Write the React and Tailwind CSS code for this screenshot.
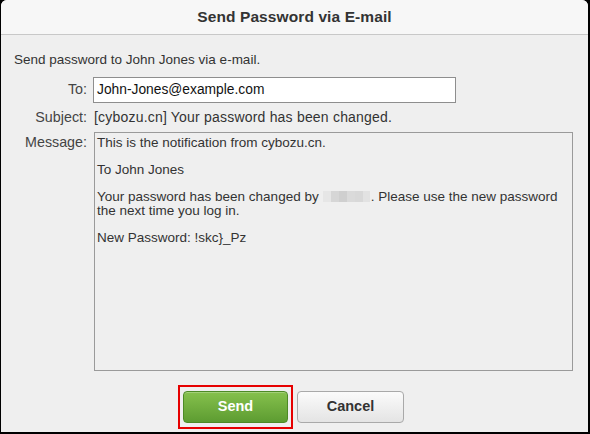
import React from "react";

export default function App() {
  const font = { fontFamily: '"Liberation Sans", Arial, sans-serif' };
  return (
    <div className="w-[590px] h-[434px] bg-black pl-px pr-[2px] pb-[2px]" style={font}>
      <div className="h-full flex flex-col bg-[#efefef] rounded-t-[6px] overflow-hidden">
        <div className="h-[35px] shrink-0 flex items-center justify-center bg-[#f7f7f7] border-b border-[#c8c8c8] text-[15.5px] font-bold text-[#333] tracking-[0.1px]">
          Send Password via E-mail
        </div>
        <div className="flex-1 flex flex-col pt-[17px] text-[13.5px] text-[#333]">
          <div className="pl-[13px] leading-[16px]">Send password to John Jones via e-mail.</div>
          <div className="grid grid-cols-[86px_1fr] gap-x-[6px] mt-[9px]">
            <div className="text-right text-[#444] text-[14.3px] leading-[16px] pt-[4px]">To:</div>
            <div>
              <div className="w-[363px] h-[26px] bg-white border border-[#8e8e8e] px-[3px] flex items-center text-[13.8px] text-[#111]">
                John-Jones@example.com
              </div>
            </div>
            <div className="text-right text-[#444] text-[14.3px] leading-[16px] mt-[6px]">Subject:</div>
            <div className="leading-[16px] mt-[6px] pl-px text-[14px] tracking-[0.2px]">[cybozu.cn] Your password has been changed.</div>
            <div className="text-right text-[#444] text-[14.3px] leading-[16px] pt-[2px] mt-[7px]">Message:</div>
            <div className="mt-[7px] pl-px">
              <div className="w-[479px] h-[239px] border border-[#9a9a9a] px-[2px] pt-[3px] text-[#333] leading-[13.5px]">
                <div>This is the notification from cybozu.cn.</div>
                <div className="h-[13.5px]" />
                <div>To John Jones</div>
                <div className="h-[13.5px]" />
                <div className="flex items-center">
                  <span>Your password has been changed by</span>
                  <span className="inline-flex ml-[4px] mr-[1px] h-[11px]">
                    <span className="w-[8px] bg-[#e6e6e6]" />
                    <span className="w-[8px] bg-[#d6d6d6]" />
                    <span className="w-[8px] bg-[#cfcfcf]" />
                    <span className="w-[8px] bg-[#dadada]" />
                    <span className="w-[8px] bg-[#d8d8d8]" />
                    <span className="w-[7px] bg-[#e2e2e2]" />
                  </span>
                  <span>. Please use the new password</span>
                </div>
                <div>the next time you log in.</div>
                <div className="h-[13.5px]" />
                <div>New Password: !skc}_Pz</div>
              </div>
            </div>
          </div>
          <div className="mt-[14px] flex justify-center pr-[7px] gap-[4px]">
            <div className="border-2 border-[#e60000] px-[3px] py-[4px]">
              <button className="w-[105px] h-[32px] rounded-[4px] border border-[#4d8a26] bg-gradient-to-b from-[#86c14d] to-[#5d9c31] text-white text-[14.5px] font-bold shadow-[inset_0_1px_0_rgba(255,255,255,0.25)]">
                Send
              </button>
            </div>
            <div className="py-[6px]">
              <button className="w-[107px] h-[32px] rounded-[4px] border border-[#a9a9a9] bg-gradient-to-b from-[#fbfbfb] to-[#e4e4e4] text-[#333] text-[14.5px] font-bold">
                Cancel
              </button>
            </div>
          </div>
        </div>
      </div>
    </div>
  );
}
